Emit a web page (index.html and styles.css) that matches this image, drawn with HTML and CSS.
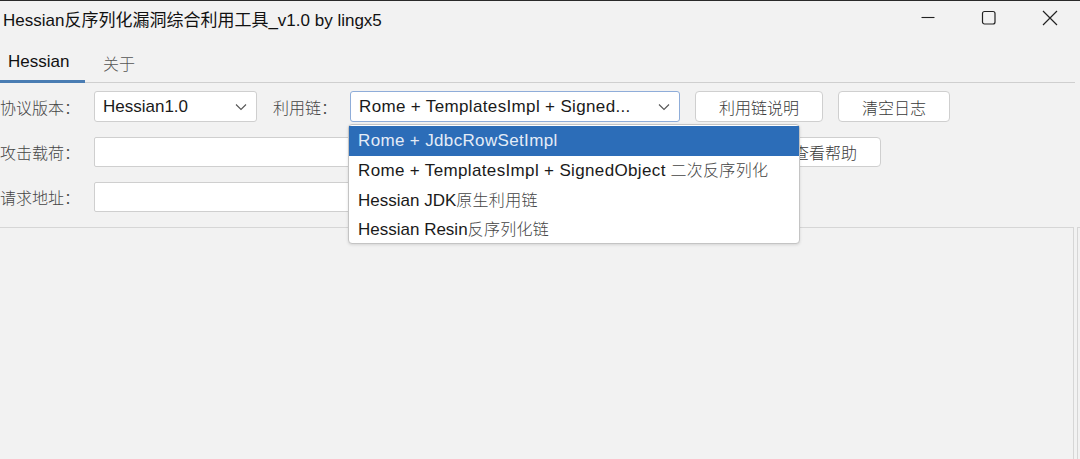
FILE: index.html
```html
<!DOCTYPE html>
<html lang="zh">
<head>
<meta charset="utf-8">
<title>Hessian反序列化漏洞综合利用工具</title>
<link rel="stylesheet" href="styles.css">
</head>
<body>
<div class="window">
  <div class="titlebar">
    <div class="title">Hessian反序列化漏洞综合利用工具_v1.0 by lingx5</div>
    <div class="controls">
      <span class="ctl"><svg width="16" height="16" viewBox="0 0 16 16"><path d="M1.5 7.5h13" stroke="#222" stroke-width="1.1" fill="none"/></svg></span>
      <span class="ctl"><svg width="16" height="16" viewBox="0 0 16 16"><rect x="1.5" y="1.5" width="12.5" height="12.5" rx="2" stroke="#222" stroke-width="1.2" fill="none"/></svg></span>
      <span class="ctl"><svg width="16" height="16" viewBox="0 0 16 16"><path d="M1 1l14 14M15 1L1 15" stroke="#222" stroke-width="1.2" fill="none"/></svg></span>
    </div>
  </div>

  <div class="tabs">
    <div class="tab active">Hessian</div>
    <div class="tab tab-about cn">关于</div>
    <div class="tabs-fill"></div>
  </div>

  <div class="form">
    <div class="row">
      <div class="label cn">协议版本：</div>
      <div class="combo combo-ver">
        <span>Hessian1.0</span>
        <svg class="chev" width="12" height="8" viewBox="0 0 12 8"><path d="M1 1.5l5 5 5-5" stroke="#555" stroke-width="1.1" fill="none"/></svg>
      </div>
      <div class="label label-chain cn">利用链：</div>
      <div class="combo combo-chain">
        <span class="plus">Rome + TemplatesImpl + Signed...</span>
        <svg class="chev" width="12" height="8" viewBox="0 0 12 8"><path d="M1 1.5l5 5 5-5" stroke="#555" stroke-width="1.1" fill="none"/></svg>
      </div>
      <button class="btn btn-desc cn">利用链说明</button>
      <button class="btn btn-clear cn">清空日志</button>
    </div>
    <div class="row">
      <div class="label cn">攻击载荷：</div>
      <div class="input"></div>
      <button class="btn btn-help cn">查看帮助</button>
    </div>
    <div class="row">
      <div class="label cn">请求地址：</div>
      <div class="input"></div>
    </div>
  </div>

  <div class="log-area">
    <div class="log-main"></div>
    <div class="log-side"></div>
  </div>

  <ul class="dropdown">
    <li class="item selected plus">Rome + JdbcRowSetImpl</li>
    <li class="item"><span class="plus">Rome + TemplatesImpl + SignedObject</span> <span class="cn">二次反序列化</span></li>
    <li class="item">Hessian JDK<span class="cn">原生利用链</span></li>
    <li class="item">Hessian Resin<span class="cn">反序列化链</span></li>
  </ul>
</div>
</body>
</html>
```

FILE: styles.css
```css
* { box-sizing: border-box; }
html, body {
  margin: 0;
  padding: 0;
  width: 1080px;
  height: 459px;
  overflow: hidden;
  background: #f2f2f2;
  font-family: "Liberation Sans", Arial, "Noto Sans CJK SC", sans-serif;
  color: #1a1a1a;
}
.window {
  position: relative;
  width: 1080px;
  height: 459px;
  display: flex;
  flex-direction: column;
  border-top: 1px solid #2a2a2a;
}
.cn {
  font-family: "Noto Sans CJK SC", sans-serif;
  font-weight: 300;
  color: #454545;
}
.plus { letter-spacing: 0.35px; }
.titlebar {
  height: 39px;
  display: flex;
  align-items: center;
  justify-content: space-between;
  padding-left: 3px;
}
.title {
  font-size: 17px;
  color: #111;
  margin-top: -4px;
  white-space: nowrap;
}
.controls {
  display: flex;
  align-items: center;
  margin-top: -5px;
  padding-right: 22px;
}
.ctl {
  display: flex;
  width: 16px;
  height: 16px;
  margin-left: 45px;
}
.tabs {
  height: 43px;
  display: flex;
  align-items: stretch;
}
.tab {
  display: flex;
  align-items: center;
  font-size: 17px;
  padding: 3px 0 0 8px;
  border-bottom: 1px solid #cfcfcf;
  white-space: nowrap;
}
.tab.active {
  color: #111;
  width: 85px;
  border-bottom: 3px solid #4a7db3;
}
.tab-about {
  width: 66px;
  font-size: 16px;
  padding-left: 18px;
  color: #555;
}
.tabs-fill {
  flex: 1;
  margin-right: 5px;
  border-bottom: 1px solid #cfcfcf;
}
.form {
  display: flex;
  flex-direction: column;
  gap: 15px;
  padding-top: 8px;
}
.row {
  display: flex;
  align-items: center;
  height: 30px;
}
.row:first-child { height: 31px; }
.label {
  width: 94px;
  font-size: 16px;
  white-space: nowrap;
}
.label-chain {
  width: 77px;
  margin-left: 16px;
}
.combo {
  height: 31px;
  background: #fff;
  border: 1px solid #cfcfcf;
  border-radius: 3px;
  display: flex;
  align-items: center;
  justify-content: space-between;
  padding: 0 9px 0 8px;
  font-size: 17px;
  color: #1a1a1a;
  white-space: nowrap;
}
.combo-ver { width: 163px; }
.combo-chain {
  width: 330px;
  border-color: #8fadd9;
}
.chev { flex: none; }
.btn {
  height: 31px;
  background: #fff;
  border: 1px solid #cfcfcf;
  border-radius: 4px;
  font-size: 16px;
  color: #3a3a3a;
  padding: 0;
}
.btn-desc { width: 128px; margin-left: 15px; }
.btn-clear { width: 112px; margin-left: 15px; }
.btn-help { width: 112px; margin-left: 14px; height: 30px; }
.input {
  width: 661px;
  height: 30px;
  background: #fff;
  border: 1px solid #cfcfcf;
  border-radius: 2px;
}
.log-area {
  flex: 1;
  display: flex;
  margin-top: 15px;
  gap: 3px;
}
.log-main {
  width: 1074px;
  border-top: 1px solid #d6d6d6;
  border-right: 1px solid #d6d6d6;
  background: #f2f2f2;
}
.log-side {
  flex: 1;
  border-top: 1px solid #d6d6d6;
  border-left: 1px solid #d6d6d6;
}
.dropdown {
  position: absolute;
  left: 348px;
  top: 123px;
  width: 452px;
  margin: 0;
  padding: 1px 0 0 0;
  list-style: none;
  background: #fff;
  border: 1px solid #c4c4c4;
  border-radius: 4px;
  box-shadow: 0 1px 3px rgba(0,0,0,0.12);
  height: 120px;
}
.item {
  display: block;
  height: 29.5px;
  line-height: 26px;
  padding-left: 9px;
  font-size: 17px;
  color: #1a1a1a;
  white-space: nowrap;
}
.item .cn { font-size: 16px; letter-spacing: 0.3px; }
.item.selected {
  background: #2c6db8;
  color: #e4ecf7;
  height: 30px;
  line-height: 30px;
}
```
